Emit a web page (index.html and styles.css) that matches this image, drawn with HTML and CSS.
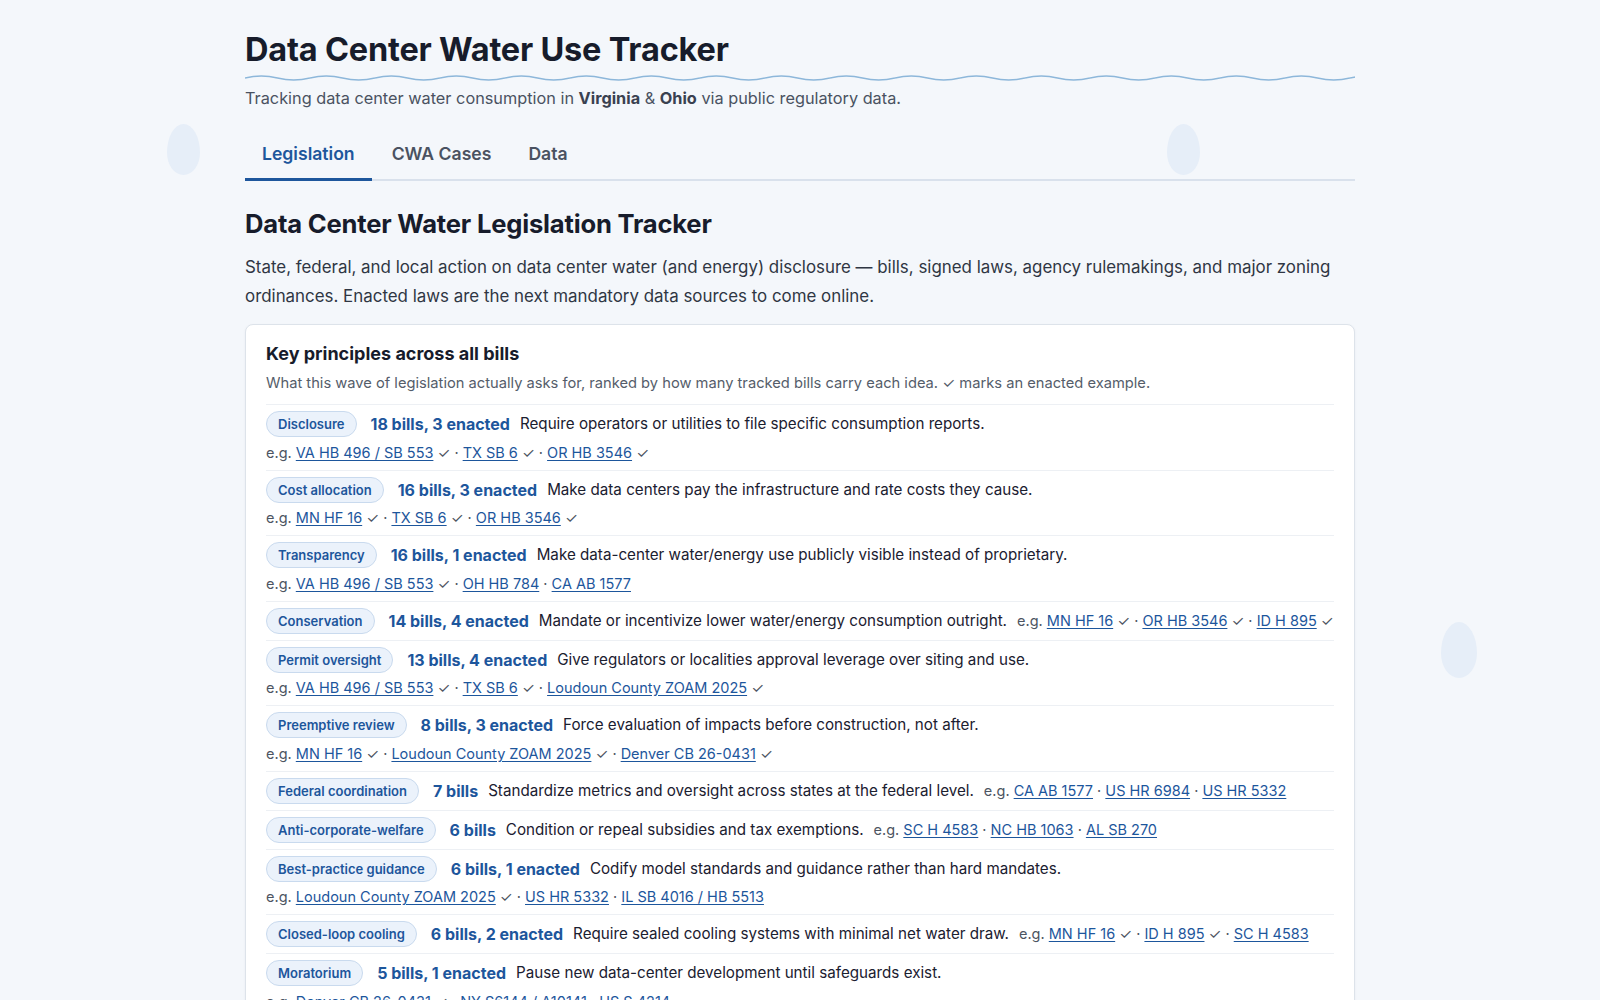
FILE: index.html
```html
<!DOCTYPE html>
<html lang="en">

<head>
    <meta charset="UTF-8">
    <meta name="viewport" content="width=device-width, initial-scale=1.0">
    <title>Data Center Water Use Tracker</title>
    <link rel="stylesheet" href="styles.css">
</head>

<body>
    <!-- floating droplets in the background -->
    <div class="drops" aria-hidden="true">
        <span class="drop drop-left"></span>
        <span class="drop drop-top"></span>
        <span class="drop drop-right"></span>
    </div>

    <main class="page">
        <header class="masthead">
            <h1>Data Center Water Use Tracker</h1>
            <svg class="wave" width="100%" height="8" aria-hidden="true">
                <defs>
                    <pattern id="ripple" width="65" height="8" patternUnits="userSpaceOnUse">
                        <path d="M0 4 Q16.25 0 32.5 4 T65 4" fill="none" stroke="#8db7da" stroke-width="1.4" />
                    </pattern>
                </defs>
                <rect width="100%" height="8" fill="url(#ripple)" />
            </svg>
            <p class="tagline">Tracking data center water consumption in <strong>Virginia</strong> &amp; <strong>Ohio</strong> via public regulatory data.</p>
        </header>

        <nav class="tabs">
            <a href="#" class="tab is-active">Legislation</a>
            <a href="#" class="tab">CWA Cases</a>
            <a href="#" class="tab">Data</a>
        </nav>

        <section class="legislation">
            <h2>Data Center Water Legislation Tracker</h2>
            <p class="lede">State, federal, and local action on data center water (and energy) disclosure — bills, signed laws, agency rulemakings, and major zoning ordinances. Enacted laws are the next mandatory data sources to come online.</p>

            <div class="card">
                <h3>Key principles across all bills</h3>
                <p class="card-note">What this wave of legislation actually asks for, ranked by how many tracked bills carry each idea. ✓ marks an enacted example.</p>

                <ul class="principles">
                    <li class="principle">
                        <span class="pill">Disclosure</span>
                        <span class="count">18 bills, 3 enacted</span>
                        <span class="summary">Require operators or utilities to file specific consumption reports.</span>
                        <span class="examples">e.g. <a href="#">VA HB 496 / SB 553</a> ✓ · <a href="#">TX SB 6</a> ✓ · <a href="#">OR HB 3546</a> ✓</span>
                    </li>
                    <li class="principle">
                        <span class="pill">Cost allocation</span>
                        <span class="count">16 bills, 3 enacted</span>
                        <span class="summary">Make data centers pay the infrastructure and rate costs they cause.</span>
                        <span class="examples">e.g. <a href="#">MN HF 16</a> ✓ · <a href="#">TX SB 6</a> ✓ · <a href="#">OR HB 3546</a> ✓</span>
                    </li>
                    <li class="principle">
                        <span class="pill">Transparency</span>
                        <span class="count">16 bills, 1 enacted</span>
                        <span class="summary">Make data-center water/energy use publicly visible instead of proprietary.</span>
                        <span class="examples">e.g. <a href="#">VA HB 496 / SB 553</a> ✓ · <a href="#">OH HB 784</a> · <a href="#">CA AB 1577</a></span>
                    </li>
                    <li class="principle">
                        <span class="pill">Conservation</span>
                        <span class="count">14 bills, 4 enacted</span>
                        <span class="summary">Mandate or incentivize lower water/energy consumption outright.</span>
                        <span class="examples">e.g. <a href="#">MN HF 16</a> ✓ · <a href="#">OR HB 3546</a> ✓ · <a href="#">ID H 895</a> ✓</span>
                    </li>
                    <li class="principle">
                        <span class="pill">Permit oversight</span>
                        <span class="count">13 bills, 4 enacted</span>
                        <span class="summary">Give regulators or localities approval leverage over siting and use.</span>
                        <span class="examples">e.g. <a href="#">VA HB 496 / SB 553</a> ✓ · <a href="#">TX SB 6</a> ✓ · <a href="#">Loudoun County ZOAM 2025</a> ✓</span>
                    </li>
                    <li class="principle">
                        <span class="pill">Preemptive review</span>
                        <span class="count">8 bills, 3 enacted</span>
                        <span class="summary">Force evaluation of impacts before construction, not after.</span>
                        <span class="examples">e.g. <a href="#">MN HF 16</a> ✓ · <a href="#">Loudoun County ZOAM 2025</a> ✓ · <a href="#">Denver CB 26-0431</a> ✓</span>
                    </li>
                    <li class="principle">
                        <span class="pill">Federal coordination</span>
                        <span class="count">7 bills</span>
                        <span class="summary">Standardize metrics and oversight across states at the federal level.</span>
                        <span class="examples">e.g. <a href="#">CA AB 1577</a> · <a href="#">US HR 6984</a> · <a href="#">US HR 5332</a></span>
                    </li>
                    <li class="principle">
                        <span class="pill">Anti-corporate-welfare</span>
                        <span class="count">6 bills</span>
                        <span class="summary">Condition or repeal subsidies and tax exemptions.</span>
                        <span class="examples">e.g. <a href="#">SC H 4583</a> · <a href="#">NC HB 1063</a> · <a href="#">AL SB 270</a></span>
                    </li>
                    <li class="principle">
                        <span class="pill">Best-practice guidance</span>
                        <span class="count">6 bills, 1 enacted</span>
                        <span class="summary">Codify model standards and guidance rather than hard mandates.</span>
                        <span class="examples">e.g. <a href="#">Loudoun County ZOAM 2025</a> ✓ · <a href="#">US HR 5332</a> · <a href="#">IL SB 4016 / HB 5513</a></span>
                    </li>
                    <li class="principle">
                        <span class="pill">Closed-loop cooling</span>
                        <span class="count">6 bills, 2 enacted</span>
                        <span class="summary">Require sealed cooling systems with minimal net water draw.</span>
                        <span class="examples">e.g. <a href="#">MN HF 16</a> ✓ · <a href="#">ID H 895</a> ✓ · <a href="#">SC H 4583</a></span>
                    </li>
                    <li class="principle">
                        <span class="pill">Moratorium</span>
                        <span class="count">5 bills, 1 enacted</span>
                        <span class="summary">Pause new data-center development until safeguards exist.</span>
                        <span class="examples">e.g. <a href="#">Denver CB 26-0431</a> ✓ · <a href="#">NY S6144 / A10141</a> · <a href="#">US S 4214</a></span>
                    </li>
                </ul>
            </div>
        </section>
    </main>
</body>

</html>
```

FILE: styles.css
```css
* {
    box-sizing: border-box;
}

body {
    margin: 0;
    background-color: #f4f7fb;
    color: #1b2030;
    font-family: Inter, "Noto Sans", "Liberation Sans", sans-serif;
}

/* background droplets */
.drops {
    position: absolute;
    inset: 0;
    z-index: 0;
    pointer-events: none;
}

.drop {
    position: absolute;
    width: 33px;
    height: 51px;
    border-radius: 50% 50% 50% 50% / 56% 56% 44% 44%;
    background-color: #e6eef8;
}

.drop-left {
    left: 167px;
    top: 124px;
}

.drop-top {
    left: 1167px;
    top: 124px;
}

.drop-right {
    left: 1441px;
    top: 622px;
    width: 36px;
    height: 56px;
}

.page {
    position: relative;
    z-index: 1;
    max-width: 1110px;
    margin: 0 auto;
    padding-top: 30px;
}

/* header */
.masthead h1 {
    margin: 0;
    font-size: 32.5px;
    line-height: 1.2;
    font-weight: 700;
    color: #171c2b;
    letter-spacing: -0.2px;
}

.wave {
    display: block;
    margin-top: 5px;
}

.tagline {
    margin: 4px 0 0;
    font-size: 16.3px;
    line-height: 24px;
    color: #4a5261;
}

.tagline strong {
    color: #3a4150;
}

/* tabs */
.tabs {
    display: flex;
    gap: 3px;
    margin-top: 21px;
    border-bottom: 2px solid #d9e1ec;
}

.tab {
    padding: 11px 17px 12px;
    margin-bottom: -2px;
    border-bottom: 3px solid transparent;
    font-size: 17.6px;
    line-height: 24px;
    font-weight: 600;
    color: #4a5261;
    text-decoration: none;
}

.tab.is-active {
    color: #1d569c;
    border-bottom-color: #1d569c;
}

/* legislation section */
.legislation h2 {
    margin: 27px 0 0;
    font-size: 25.6px;
    line-height: 32px;
    font-weight: 700;
    color: #171c2b;
    letter-spacing: -0.2px;
}

.lede {
    margin: 13px 0 0;
    font-size: 16.9px;
    line-height: 29px;
    color: #2f3643;
}

.card {
    margin-top: 13px;
    padding: 17px 20px 20px;
    background-color: #fff;
    border: 1px solid #dde3ea;
    border-radius: 8px;
    box-shadow: 0 1px 3px rgba(20, 40, 70, 0.05);
}

.card h3 {
    margin: 0;
    font-size: 18px;
    line-height: 24px;
    font-weight: 700;
    color: #171c2b;
}

.card-note {
    margin: 6px 0 10px;
    font-size: 14.7px;
    line-height: 22px;
    color: #555d6a;
}

.principles {
    margin: 0;
    padding: 0;
    list-style: none;
}

.principle {
    display: flex;
    flex-wrap: wrap;
    align-items: center;
    column-gap: 10px;
    row-gap: 4.5px;
    padding: 6px 0;
    border-top: 1px solid #edf0f4;
}

.pill {
    margin-right: 4px;
    padding: 0 11px;
    border: 1px solid #c9daee;
    border-radius: 999px;
    background-color: #ebf2fb;
    font-size: 13px;
    line-height: 24px;
    font-weight: 600;
    color: #1d569c;
}

.count {
    font-size: 16px;
    line-height: 22px;
    font-weight: 700;
    color: #1d569c;
}

.summary {
    font-size: 15.2px;
    line-height: 22px;
    color: #1b2030;
}

.examples {
    white-space: nowrap;
    font-size: 14.5px;
    line-height: 22px;
    color: #4d5562;
}

.examples a {
    color: #1d569c;
    text-decoration: underline;
    text-underline-offset: 2px;
}
```
